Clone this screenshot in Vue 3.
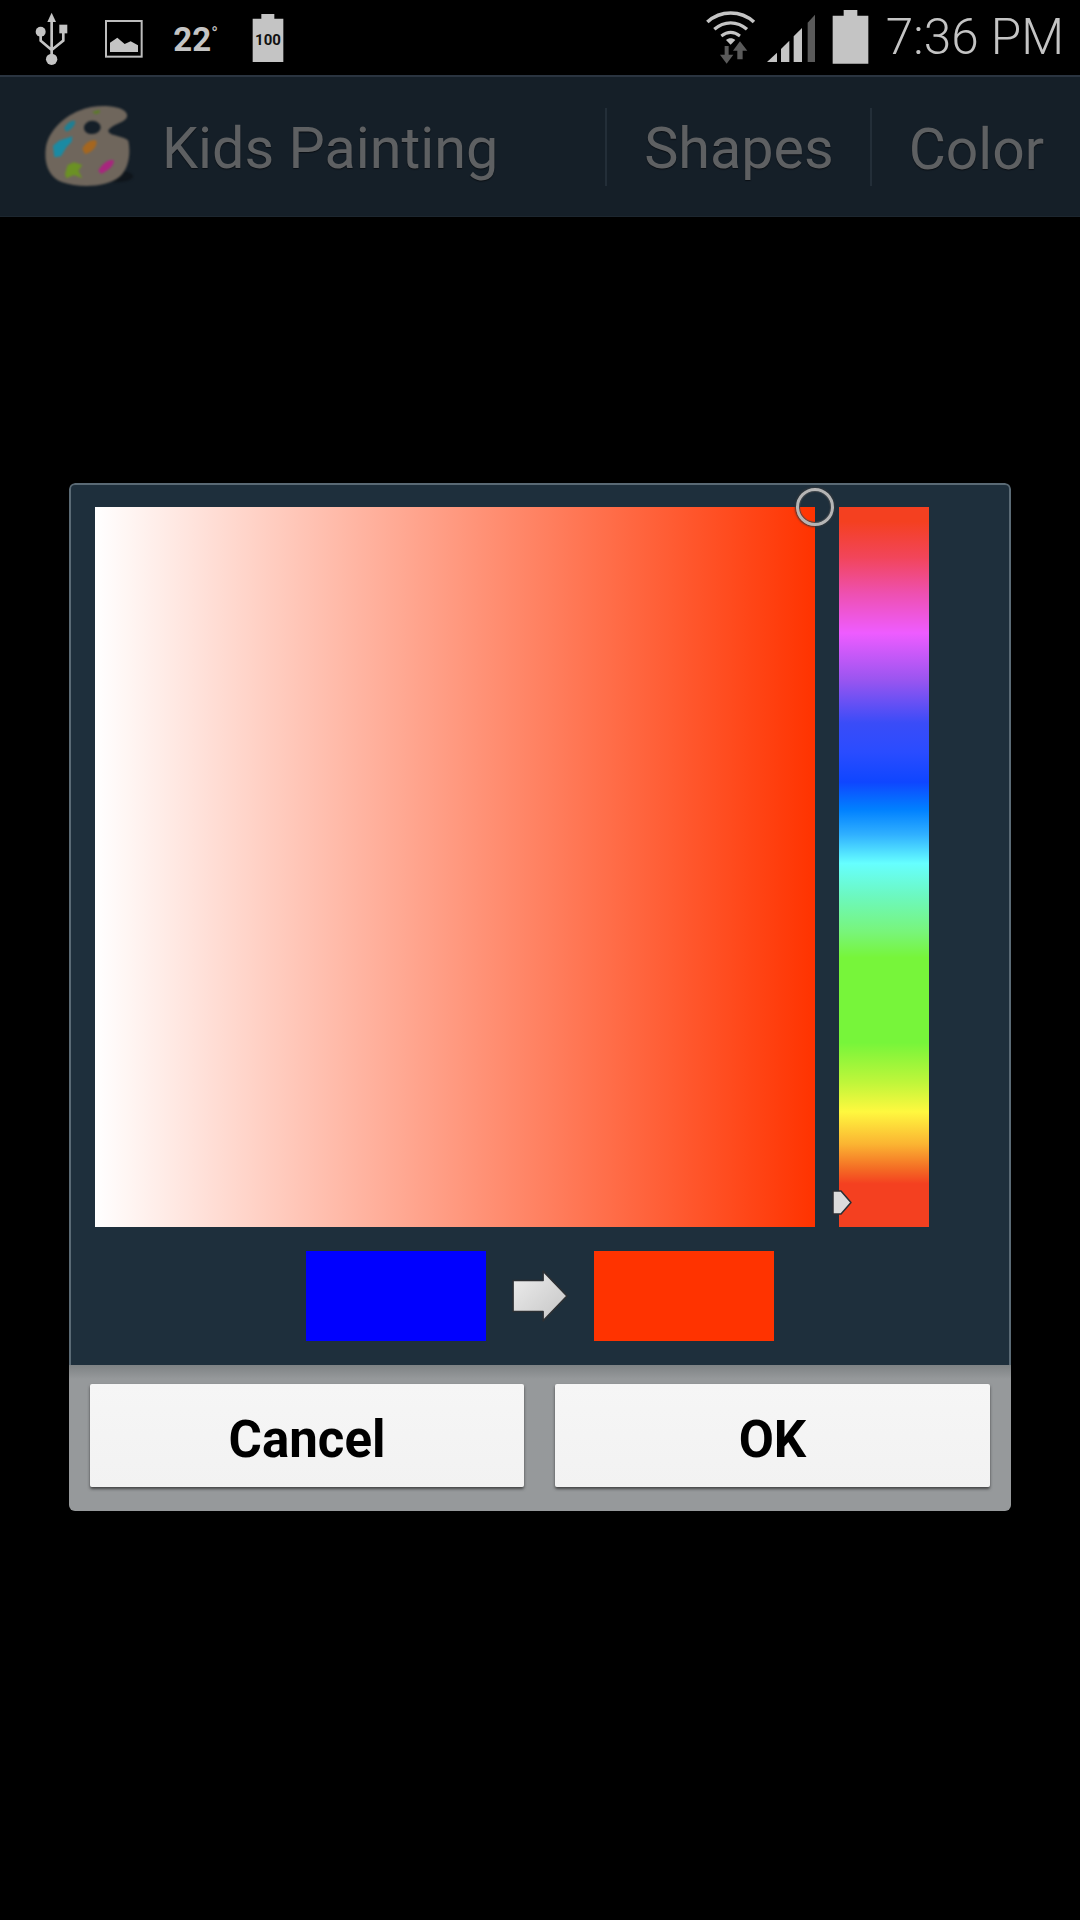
<script setup>
const hueStops = [
  '#f44020 0%', '#f44020 2%', '#f2455a 7%', '#ee50b0 12%', '#ee5cff 17.5%', '#9a55f0 24%',
  '#3a4cf8 30%', '#2a4cff 34%', '#0f46ff 38.2%', '#0080ff 42%', '#30b0ff 45.5%', '#66ffff 49.5%',
  '#6cf8c0 54%', '#78f57a 59%', '#77f53a 62.6%', '#77f53a 74.4%', '#c0f63a 80%', '#fff83f 84%',
  '#fbb432 88.5%', '#f46a24 92%', '#f44020 94%', '#f44020 100%',
]
const hueBar = `linear-gradient(to bottom, ${hueStops.join(', ')})`
</script>

<template>
  <div class="screen">
    <div class="status-bar">
      <div class="status-left">
        <svg class="ic-usb" viewBox="105 0 100 225" width="33.3" height="75">
          <path d="M155 38 L168 66 H142 Z" fill="#c4c4c4" />
          <path d="M155 60 V170 M122 100 V122 L155 150 M190 95 V122 L155 150" fill="none" stroke="#c4c4c4" stroke-width="8" />
          <circle cx="155" cy="178" r="17" fill="#c4c4c4" />
          <circle cx="122" cy="95" r="15" fill="#c4c4c4" />
          <rect x="178" y="74" width="24" height="26" fill="#c4c4c4" />
        </svg>
        <svg class="ic-image" viewBox="312 0 120 225" width="40" height="75">
          <rect x="318" y="63" width="107" height="107" fill="none" stroke="#bdbdbd" stroke-width="6" />
          <path d="M330 156 V128 L352 113 L374 132 L392 124 L414 136 V156 Z" fill="#c4c4c4" />
        </svg>
        <span class="temp">22<sup>°</sup></span>
        <svg class="ic-batt-small" viewBox="755 0 96 225" width="32" height="75">
          <path d="M783 42 H822 V56 H849 V186 H757 V56 H783 Z" fill="#c4c4c4" />
          <text x="803" y="134" text-anchor="middle" class="batt-label">100</text>
        </svg>
      </div>
      <div class="status-right">
        <svg class="ic-wifi" viewBox="70 0 160 225" width="53.3" height="75">
          <path d="M80 66 C120 30 180 30 220 66" fill="none" stroke="#c4c4c4" stroke-width="11" />
          <path d="M101 88 C130 62 170 62 199 88" fill="none" stroke="#c4c4c4" stroke-width="10" />
          <path d="M122 108 C140 94 160 94 178 108" fill="none" stroke="#c4c4c4" stroke-width="9" />
          <path d="M150 134 L136 120 C144 113 156 113 164 120 Z" fill="#c4c4c4" />
          <path d="M132 138 H144 V164 H158 L138 191 L118 164 H132 Z" fill="#5a5a5a" />
          <path d="M178 124 L200 152 H186 V178 H170 V152 H157 Z" fill="#5a5a5a" />
        </svg>
        <svg class="ic-signal" viewBox="255 0 150 225" width="50" height="75">
          <path d="M258 186 L288 158 V186 Z" fill="#c4c4c4" />
          <path d="M300 147 L325 122 V186 H300 Z" fill="#c4c4c4" />
          <path d="M338 109 L363 84 V186 H338 Z" fill="#c4c4c4" />
          <path d="M380 68 L402 44 V186 H380 Z" fill="#5a5a5a" />
        </svg>
        <svg class="ic-batt" viewBox="455 0 111 225" width="37" height="75">
          <path d="M490 30 H531 V47 H564 V191 H457 V47 H490 Z" fill="#c4c4c4" />
        </svg>
        <span class="clock">7:36 PM</span>
      </div>
    </div>

    <div class="action-bar">
      <svg class="logo" viewBox="0 0 360 330" width="120" height="110">
        <ellipse cx="262" cy="262" rx="50" ry="18" fill="#0f151b" />
        <path
          fill-rule="evenodd"
          d="M240 52 C280 55 302 70 292 88 C284 102 250 106 238 124 C238 142 278 138 298 155 C306 192 300 240 270 265 C235 295 150 298 100 280 C60 265 45 225 50 180 C55 130 100 85 150 65 C180 52 215 50 240 52 Z M190 95 C176 95 165 105 165 116 C165 128 176 135 190 135 C204 135 215 126 215 115 C215 104 204 95 190 95 Z"
          fill="#6f665c"
        />
        <path d="M190 68 L212 62 L212 72 L198 76 Z" fill="#5c7a2a" />
        <path d="M105 118 C115 100 130 92 138 96 C142 106 125 125 112 128 Z" fill="#1f7f93" />
        <path d="M72 170 L90 155 L105 150 L130 142 L128 158 L112 175 L96 202 L76 205 Z" fill="#1a8aa3" />
        <path d="M160 180 C168 160 190 150 202 155 C206 170 190 190 168 195 Z" fill="#a5661f" />
        <path d="M108 255 L116 228 L135 220 L160 228 L148 245 L160 268 L135 258 L112 268 Z" fill="#6b9124" />
        <path d="M208 245 C218 225 240 208 254 214 C258 228 235 248 216 254 Z" fill="#a8267e" />
      </svg>
      <span class="app-title">Kids Painting</span>
      <div class="action-items">
        <span class="divider"></span>
        <span class="action shapes">Shapes</span>
        <span class="divider"></span>
        <span class="action color">Color</span>
      </div>
    </div>

    <div class="dialog">
      <div class="dialog-body">
        <div class="picker">
          <div class="sv-square">
            <span class="sv-thumb"></span>
          </div>
          <div class="hue-bar" :style="{ background: hueBar }">
            <svg class="hue-thumb" viewBox="0 0 22 27" width="22" height="27">
              <path d="M2 2 H10 L20 13.5 L10 25 H2 Z" fill="#dcdcdc" stroke="#2a2e33" stroke-width="1.5" stroke-linejoin="round" />
            </svg>
          </div>
        </div>
        <div class="swatches">
          <div class="swatch old"></div>
          <svg class="arrow" viewBox="0 0 56 52" width="58" height="54">
            <defs>
              <linearGradient id="arrowFill" x1="0" y1="0" x2="1" y2="1">
                <stop offset="0" stop-color="#eeeeee" />
                <stop offset="1" stop-color="#c4c4c4" />
              </linearGradient>
            </defs>
            <path d="M2 11 H31 V2 L54 26 L31 50 V41 H2 Z" fill="url(#arrowFill)" stroke="#2b2f33" stroke-width="1.5" stroke-linejoin="round" />
          </svg>
          <div class="swatch new"></div>
        </div>
      </div>
      <div class="dialog-buttons">
        <button class="btn">Cancel</button>
        <button class="btn">OK</button>
      </div>
    </div>
  </div>
</template>

<style>
html, body { background: #000; }
</style>

<style scoped>
.screen {
  width: 1080px;
  height: 1920px;
  background: #000;
  overflow: hidden;
  font-family: Roboto, "Liberation Sans", sans-serif;
}

.status-bar {
  height: 75px;
  display: flex;
  justify-content: space-between;
  align-items: center;
}
.status-left { display: flex; align-items: center; padding-left: 35px; }
.status-right { display: flex; align-items: center; padding-right: 16px; }
.status-left svg, .status-right svg { display: block; }
.ic-image { margin-left: 36px; }
.temp {
  margin-left: 29px;
  width: 48px;
  color: #c4c4c4;
  font-size: 33px;
  font-weight: 700;
  line-height: 75px;
  margin-top: 3px;
}
.temp sup { font-size: 18px; font-weight: 400; line-height: 0; vertical-align: 11px; }
.ic-batt-small { margin-left: 31px; }
.batt-label { font: 700 45px Roboto, sans-serif; fill: #111; }
.ic-signal { margin-left: 9px; }
.ic-batt { margin-left: 16px; }
.clock {
  margin-left: 17px;
  color: #c4c4c4;
  font-size: 49.5px;
  font-weight: 300;
  line-height: 75px;
}

.action-bar {
  height: 142px;
  box-sizing: border-box;
  background: #151f28;
  border-top: 2px solid #2a3440;
  border-bottom: 1px solid #1c262f;
  display: flex;
  align-items: center;
  padding-left: 29px;
}
.logo { display: block; margin-top: -6px; filter: blur(1px); flex: none; }
.app-title {
  margin: 5px 0 0 13px;
  color: #5e6062;
  font-size: 57.5px;
  line-height: 1;
  text-shadow: 0 1px 1px #0b0f14;
}
.action-items { margin-left: auto; display: flex; align-items: center; }
.divider { width: 2px; height: 78px; background: #232e38; }
.action {
  color: #5e6062;
  font-size: 57.5px;
  line-height: 1;
  margin-top: 5px;
  text-shadow: 0 1px 1px #0b0f14;
}
.shapes { margin-left: 37px; margin-right: 36px; }
.color { font-size: 57px; margin-left: 37px; margin-right: 36px; }

.dialog {
  width: 942px;
  margin: 266px 0 0 69px;
  border-radius: 6px;
  overflow: hidden;
}
.dialog-body {
  box-sizing: border-box;
  background: #1e2f3c;
  border: 2px solid #5a6a75;
  border-bottom: none;
  border-radius: 6px 6px 0 0;
  padding: 22px 24px 24px;
}
.picker { display: flex; gap: 24px; }
.sv-square {
  width: 720px;
  height: 720px;
  position: relative;
  background: linear-gradient(to right, #fff, #ff3300);
}
.sv-thumb {
  position: absolute;
  top: -19px;
  right: -19px;
  width: 38px;
  height: 38px;
  box-sizing: border-box;
  border-radius: 50%;
  border: 3px solid #b5b5b5;
  box-shadow: 0 0 2px 1px #33373b, inset 0 0 1px 1px #44484c;
}
.hue-bar { width: 90px; height: 720px; position: relative; }
.hue-thumb { position: absolute; left: -8px; top: 682px; display: block; }

.swatches {
  display: flex;
  justify-content: center;
  align-items: center;
  gap: 25px;
  margin-top: 24px;
}
.swatch { width: 180px; height: 90px; }
.swatch.old { background: #0000ff; }
.swatch.new { background: #ff3300; }
.arrow { display: block; }

.dialog-buttons {
  display: grid;
  grid-template-columns: 434px 435px;
  gap: 31px;
  padding: 19px 21px 24px;
  background: linear-gradient(to bottom, #7e8284 0, #96999b 14px);
}
.btn {
  height: 103px;
  padding: 7px 0 0;
  border: none;
  border-radius: 2px;
  background: linear-gradient(to bottom, #f6f6f6, #f2f2f2);
  box-shadow: 0 2px 3px rgba(40, 40, 40, 0.75);
  color: #000;
  font-family: Roboto, "Liberation Sans", sans-serif;
  font-size: 51px;
  font-weight: 700;
}
</style>
